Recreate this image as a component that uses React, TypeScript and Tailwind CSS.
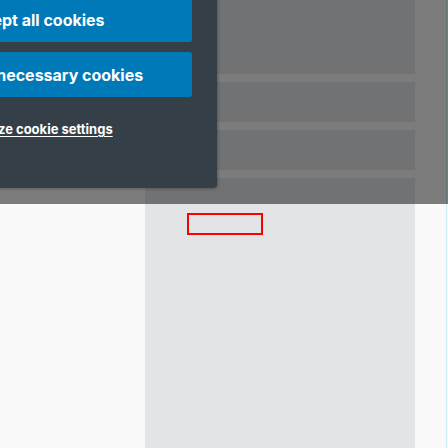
import React from "react";

export default function App() {
  return (
    <div className="relative h-[448px] w-[448px] overflow-hidden bg-[#f9f9f9] font-['Inter',sans-serif]">
      {/* page behind the dialog */}
      <div className="flex h-full">
        <div className="w-[145px] bg-[#f9f9f9]" />
        <div className="flex w-[270px] flex-col bg-[#f9f9f9]">
          <div className="h-[74px] bg-[#e3e4e6]" />
          <div className="mt-2 h-10 bg-[#e3e4e6]" />
          <div className="mt-2 h-10 bg-[#e3e4e6]" />
          <div className="mt-2 flex-1 bg-[#e3e4e6] pl-[42px] pt-[35px]">
            <div className="h-[22px] w-[76px] border-2 border-[#ff0000]" />
          </div>
        </div>
        <div className="w-[31px] bg-[#f9f9f9]" />
        <div className="w-px bg-[#cfecf3]" />
        <div className="w-px bg-[#f9f9f9]" />
      </div>

      {/* backdrop */}
      <div className="absolute inset-x-0 top-0 h-[204px] bg-black/50" />

      {/* cookie dialog */}
      <div className="absolute left-[-90px] top-[-3px] flex h-[191px] w-[307px] flex-col rounded-br-[4px] bg-[#343f48] pl-[20px] pr-[25px] shadow-[1px_1px_3px_rgba(0,0,0,0.25)]">
        <button className="flex h-[45px] items-center rounded-[3px] bg-[#0079b8] pl-[32px] text-left text-[16px] font-bold text-white">
          Accept all cookies
        </button>
        <button className="mt-[10px] flex h-[45px] items-center rounded-[3px] bg-[#0079b8] pl-[26px] text-left text-[16px] font-bold text-white">
          Only necessary cookies
        </button>
        <a className="mt-[24px] pl-[15px] text-[13px] font-bold leading-[16px] text-white underline underline-offset-2">
          Customize cookie settings
        </a>
      </div>
    </div>
  );
}
